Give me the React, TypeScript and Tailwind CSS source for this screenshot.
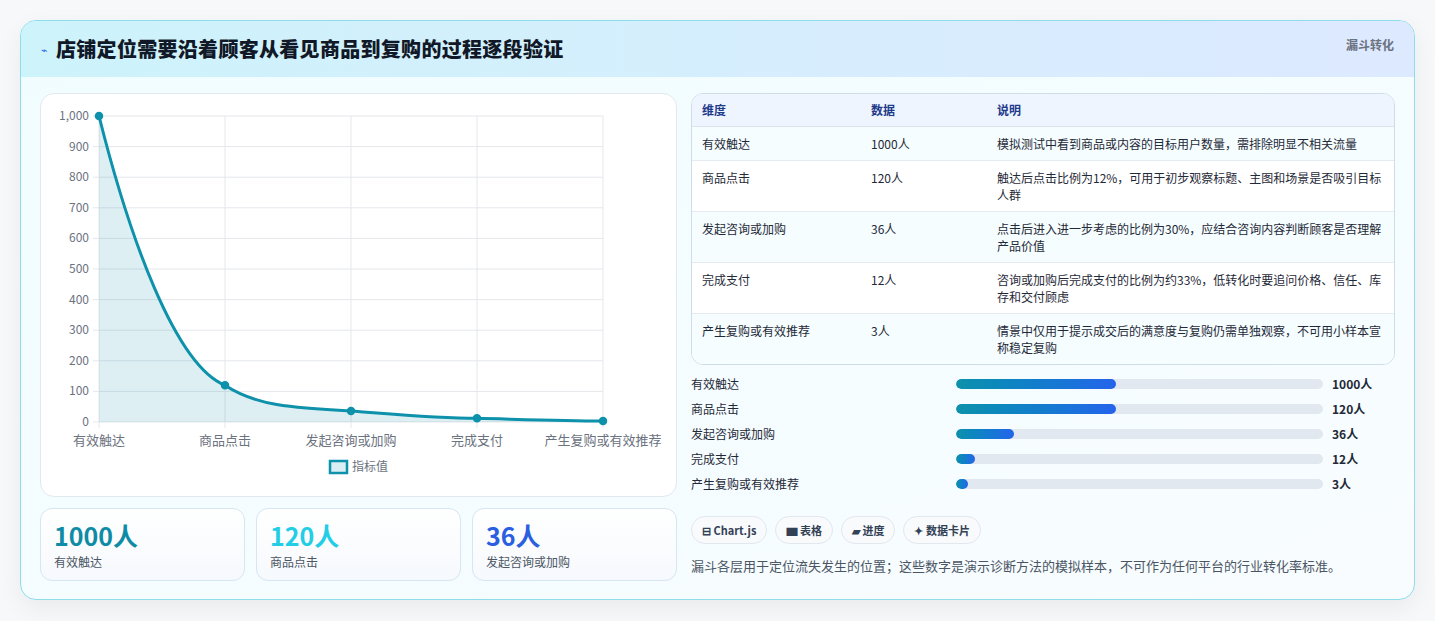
import React from "react";

const font = { fontFamily: '"Noto Sans CJK SC","Noto Sans",sans-serif' };

const rows = [
  ["有效触达", "1000人", "模拟测试中看到商品或内容的目标用户数量，需排除明显不相关流量"],
  ["商品点击", "120人", "触达后点击比例为12%，可用于初步观察标题、主图和场景是否吸引目标人群"],
  ["发起咨询或加购", "36人", "点击后进入进一步考虑的比例为30%，应结合咨询内容判断顾客是否理解产品价值"],
  ["完成支付", "12人", "咨询或加购后完成支付的比例为约33%，低转化时要追问价格、信任、库存和交付顾虑"],
  ["产生复购或有效推荐", "3人", "情景中仅用于提示成交后的满意度与复购仍需单独观察，不可用小样本宣称稳定复购"],
];

const bars: [string, string, number][] = [
  ["有效触达", "1000人", 43.5],
  ["商品点击", "120人", 43.5],
  ["发起咨询或加购", "36人", 15.8],
  ["完成支付", "12人", 5.2],
  ["产生复购或有效推荐", "3人", 3.4],
];

function Chart() {
  const x0 = 58, x1 = 562, yTop = 22, yBot = 328;
  const xs = [0, 1, 2, 3, 4].map((i) => x0 + (i * (x1 - x0)) / 4);
  const vals = [1000, 120, 36, 12, 3];
  const ys = vals.map((v) => yBot - (v / 1000) * (yBot - yTop));
  const ticks = [0, 100, 200, 300, 400, 500, 600, 700, 800, 900, 1000];
  const d = `M${xs[0]},${ys[0]} C${xs[0] + 30},${ys[0] + 120} ${xs[1] - 50},${ys[1] - 20} ${xs[1]},${ys[1]} C${xs[1] + 30},${ys[1] + 20} ${xs[2] - 60},${ys[2] - 3} ${xs[2]},${ys[2]} C${xs[2] + 40},${ys[2] + 3} ${xs[3] - 40},${ys[3]} ${xs[3]},${ys[3]} C${xs[3] + 40},${ys[3] + 1} ${xs[4] - 40},${ys[4]} ${xs[4]},${ys[4]}`;
  const labels = ["有效触达", "商品点击", "发起咨询或加购", "完成支付", "产生复购或有效推荐"];
  return (
    <svg width="637" height="403" style={font}>
      {ticks.map((t) => {
        const y = yBot - (t / 1000) * (yBot - yTop);
        return (
          <g key={t}>
            <line x1={x0 - 6} x2={x1} y1={y} y2={y} stroke="#e5e7eb" />
            <text x={x0 - 10} y={y + 4} textAnchor="end" fontSize="12" fill="#6b7280">
              {t === 1000 ? "1,000" : t}
            </text>
          </g>
        );
      })}
      {xs.map((x, i) => (
        <line key={i} x1={x} x2={x} y1={yTop} y2={yBot + 6} stroke="#e5e7eb" />
      ))}
      <path d={`${d} L${x1},${yBot} L${x0},${yBot} Z`} fill="#0e91aa" fillOpacity="0.14" />
      <path d={d} fill="none" stroke="#0e91aa" strokeWidth="3" />
      {xs.map((x, i) => (
        <circle key={i} cx={x} cy={ys[i]} r="3.5" fill="#0e91aa" stroke="#0e91aa" strokeWidth="1.5" />
      ))}
      {labels.map((l, i) => (
        <text key={l} x={xs[i]} y={yBot + 23} textAnchor="middle" fontSize="13" fill="#6b7280">{l}</text>
      ))}
      <rect x="289" y="367" width="17" height="12" fill="#dbeef3" stroke="#0e91aa" strokeWidth="2.5" />
      <text x="311" y="377" fontSize="12" fill="#6b7280">指标值</text>
    </svg>
  );
}

export default function App() {
  return (
    <div className="w-[1435px] h-[621px] bg-[#f7f8fa] pt-[20px] px-[20px]" style={font}>
      <div className="h-[580px] rounded-[16px] border border-[#8fdcea] overflow-hidden bg-gradient-to-br from-[#f0fdff] to-[#f8fcff] shadow-[0_8px_24px_rgba(0,0,0,0.06)]">
        <div className="h-[56px] flex items-center justify-between pl-[20px] pr-[20px] bg-gradient-to-r from-[#cdf3fb] to-[#dde9ff]">
          <div className="flex items-center gap-[8px]">
            <span className="text-[11px] text-[#2563eb]">⌁</span>
            <span className="text-[20px] font-black text-[#111827] tracking-[0.3px]">店铺定位需要沿着顾客从看见商品到复购的过程逐段验证</span>
          </div>
          <span className="text-[12px] font-bold text-[#6b7280] self-start mt-[15px]">漏斗转化</span>
        </div>
        <div className="flex gap-[14px] px-[19px] pt-[16px]">
          <div className="w-[637px] flex flex-col gap-[11px]">
            <div className="h-[404px] rounded-[14px] border border-[#e2e8f0] bg-white">
              <Chart />
            </div>
            <div className="grid grid-cols-3 gap-[11px]">
              {[
                ["1000人", "text-[#0e8ba6]", "有效触达"],
                ["120人", "text-[#22cde6]", "商品点击"],
                ["36人", "text-[#2a5fe0]", "发起咨询或加购"],
              ].map(([v, c, l]) => (
                <div key={l} className="h-[73px] rounded-[12px] border border-[#d6e6f2] bg-gradient-to-b from-white to-[#f6f9fd] px-[13px] pt-[10px]">
                  <div className={`text-[25px] font-bold leading-[32px] ${c}`}>{v}</div>
                  <div className="text-[12px] text-[#4b5563] mt-[2px]">{l}</div>
                </div>
              ))}
            </div>
          </div>
          <div className="w-[704px] flex flex-col">
            <div className="rounded-[12px] border border-[#cfdde9] bg-white overflow-hidden text-[12px] text-[#1f2937]">
              <div className="flex h-[33px] items-center bg-[#eef5ff] border-b border-[#dbe4ee] font-bold text-[#1e3a8a]">
                <div className="w-[179px] pl-[10px]">维度</div>
                <div className="w-[126px]">数据</div>
                <div className="flex-1">说明</div>
              </div>
              {rows.map(([a, b, c], i) => (
                <div key={a} className={`flex py-[8px] leading-[17px] ${i > 0 ? "border-t border-[#e5eaf0]" : ""} ${i % 2 === 0 ? "bg-[#f5fdff]" : "bg-white"}`}>
                  <div className="w-[179px] pl-[10px]">{a}</div>
                  <div className="w-[126px]">{b}</div>
                  <div className="flex-1 pr-[10px]">{c}</div>
                </div>
              ))}
            </div>
            <div className="mt-[10px] flex flex-col gap-[7px]">
              {bars.map(([l, v, p]) => (
                <div key={l} className="flex items-center h-[18px] text-[12px] text-[#1f2937]">
                  <div className="w-[265px]">{l}</div>
                  <div className="w-[367px] h-[10px] rounded-full bg-[#e2e8f0] overflow-hidden">
                    <div className="h-full rounded-full bg-gradient-to-r from-[#0e91aa] to-[#2563eb]" style={{ width: `${p}%` }} />
                  </div>
                  <div className="ml-[9px] font-bold">{v}</div>
                </div>
              ))}
            </div>
            <div className="flex gap-[8px] mt-[23px] text-[11px] font-bold text-[#334155]">
              {["⊟ Chart.js", "▆ 表格", "▰ 进度", "✦ 数据卡片"].map((t) => (
                <div key={t} className="h-[28px] px-[10px] flex items-center rounded-full border border-[#e2e8f0] bg-[#f8fafc]">{t}</div>
              ))}
            </div>
            <div className="mt-[12px] text-[13px] text-[#4b5563]">漏斗各层用于定位流失发生的位置；这些数字是演示诊断方法的模拟样本，不可作为任何平台的行业转化率标准。</div>
          </div>
        </div>
      </div>
    </div>
  );
}
